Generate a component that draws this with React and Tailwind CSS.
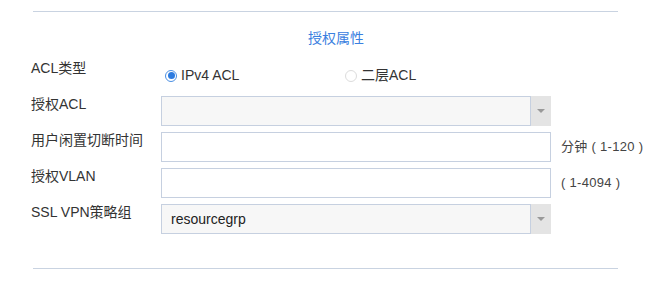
import React from 'react';

const font = { fontFamily: '"Liberation Sans", "Noto Sans CJK SC", sans-serif' };

const Radio = ({ checked, label }) => (
  <label className="flex items-center gap-[4px]">
    <span
      className={
        'flex h-[12px] w-[12px] items-center justify-center rounded-full border bg-white ' +
        (checked ? 'border-[#4a8fe3]' : 'border-[#dcdcdc]')
      }
    >
      {checked && <span className="h-[7px] w-[7px] rounded-full bg-[#2c7be0]" />}
    </span>
    <span className="text-[14px] text-[#333]">{label}</span>
  </label>
);

const Row = ({ label, children }) => (
  <div className="flex items-start">
    <div className="w-[130px] shrink-0 text-[14px] leading-[16px] text-[#333]">{label}</div>
    {children}
  </div>
);

const Select = ({ value }) => (
  <div className="flex h-[30px] w-[390px]">
    <div className="flex flex-1 items-center border border-[#c6d0e0] bg-[#f7f7f7] pl-[9px] text-[14px] text-[#222]">
      {value}
    </div>
    <div className="flex w-[20px] items-center justify-center bg-[#e4e4e4]">
      <span className="h-0 w-0 border-x-[4px] border-t-[4px] border-x-transparent border-t-[#999]" />
    </div>
  </div>
);

const Input = ({ suffix }) => (
  <div className="flex items-center">
    <div className="h-[30px] w-[390px] border border-[#c6d0e0] bg-white" />
    {suffix && <span className="ml-[10px] whitespace-pre text-[13px] tracking-[0.3px] text-[#444]">{suffix}</span>}
  </div>
);

const App = () => {
  return (
    <div className="h-[281px] w-[652px] bg-white" style={font}>
      <div className="pt-[11px]">
        <div className="ml-[33px] h-px w-[585px] bg-[#c9d3e1]" />
      </div>
      <div className="mt-[17px] pl-[308px] text-[14px] leading-[18px] text-[#3a80e0]">授权属性</div>
      <div className="mt-[13px] flex flex-col gap-[6px] pl-[31px]">
        <Row label="ACL类型">
          <div className="flex h-[30px] items-center pl-[4px] pt-[1px]">
            <div className="w-[180px]">
              <Radio checked label="IPv4 ACL" />
            </div>
            <Radio label="二层ACL" />
          </div>
        </Row>
        <Row label="授权ACL">
          <Select value="" />
        </Row>
        <Row label="用户闲置切断时间">
          <Input suffix="分钟 ( 1-120 )" />
        </Row>
        <Row label="授权VLAN">
          <Input suffix="( 1-4094 )" />
        </Row>
        <Row label="SSL VPN策略组">
          <Select value="resourcegrp" />
        </Row>
      </div>
      <div className="mt-[34px] ml-[33px] h-px w-[585px] bg-[#c9d3e1]" />
    </div>
  );
};

export default App;
